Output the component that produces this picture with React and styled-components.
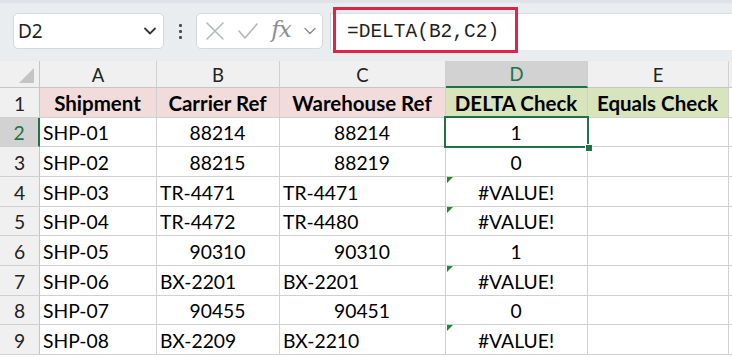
import React from "react";
import styled, { createGlobalStyle, css } from "styled-components";

const GlobalStyle = createGlobalStyle`
  html, body { margin: 0; padding: 0; background: #eaedf0; overflow: hidden; }
  #root { width: 732px; height: 357px; overflow: hidden; }
`;

const CELL_FONT = `Lato, "Noto Sans", "Liberation Sans", sans-serif`;
const GREEN = "#217346";

const Page = styled.div`
  width: 732px;
  height: 357px;
  display: flex;
  flex-direction: column;
  background: #eaedf0;
`;

const TopShade = styled.div`
  height: 3px;
  background: #dfe2e6;
`;

const Toolbar = styled.div`
  height: 58px;
  display: flex;
  align-items: flex-start;
  padding-top: 10px;
  box-sizing: border-box;
  padding-left: 13px;
`;

const Box = styled.div`
  height: 36px;
  box-sizing: border-box;
  background: #fff;
  border: 1px solid #d5d8dc;
  border-radius: 5px;
  display: flex;
  align-items: center;
`;

const NameBox = styled(Box)`
  width: 151px;
  padding: 0 6px 0 4px;
  justify-content: space-between;
  font-family: "Noto Sans", "Open Sans", sans-serif;
  font-size: 19px;
  color: #1f1f1f;
`;

const Dots = styled.div`
  width: 32px;
  height: 36px;
  display: flex;
  flex-direction: column;
  align-items: center;
  justify-content: center;
  gap: 3px;
  span {
    width: 3px;
    height: 3px;
    background: #4a4f55;
    border-radius: 1px;
  }
`;

const FxBox = styled(Box)`
  width: 127px;
  padding: 0 5px 0 8px;
  justify-content: space-between;
`;

const FxText = styled.span`
  font-family: "DejaVu Serif", "Liberation Serif", serif;
  font-style: italic;
  font-size: 23px;
  color: #8a8d91;
  letter-spacing: -1px;
  margin-top: -4px;
`;

const FormulaBar = styled.div`
  flex: 1;
  height: 37px;
  margin-left: 7px;
  background: #fff;
  border-top: 1px solid #dadde1;
  border-left: 1px solid #cfd2d6;
  box-sizing: border-box;
  position: relative;
  display: flex;
  align-items: center;
  padding-left: 16px;
  font-family: "Liberation Mono", "DejaVu Sans Mono", monospace;
  font-size: 19.5px;
  color: #1f1f1f;
`;

const Highlight = styled.div`
  position: absolute;
  left: 2px;
  top: -7px;
  width: 185px;
  height: 46px;
  box-sizing: border-box;
  border: 3px solid #e1234b;
  pointer-events: none;
`;

const Sheet = styled.div`
  display: grid;
  grid-template-columns: 40px 117px 123px 166px 142px 141px 1fr;
  grid-template-rows: 27px repeat(9, 29.67px) 1fr;
  background: #fff;
  flex: 1;
  font-family: ${CELL_FONT};
  font-size: 19.3px;
  color: #000;
`;

const ColHead = styled.div`
  background: ${(p) => (p.$active ? "#d2d2d2" : "#f0f0f0")};
  color: ${(p) => (p.$active ? GREEN : "#222")};
  border-right: 1px solid #d0d0d0;
  border-bottom: ${(p) => (p.$active ? `2px solid ${GREEN}` : "1px solid #c6c6c6")};
  box-sizing: border-box;
  display: flex;
  align-items: center;
  justify-content: center;
  padding-top: 1px;
  font-size: 18.5px;
`;

const Corner = styled.div`
  background: #f0f0f0;
  border-right: 1px solid #c6c6c6;
  border-bottom: 1px solid #c6c6c6;
  box-sizing: border-box;
  position: relative;
  &::after {
    content: "";
    position: absolute;
    right: 5px;
    bottom: 4px;
    width: 0;
    height: 0;
    border-left: 15px solid transparent;
    border-bottom: 15px solid #c4c4c4;
  }
`;

const RowHead = styled.div`
  background: ${(p) => (p.$active ? "#d2d2d2" : "#f0f0f0")};
  color: ${(p) => (p.$active ? GREEN : "#222")};
  border-right: ${(p) => (p.$active ? `2px solid ${GREEN}` : "1px solid #c6c6c6")};
  border-bottom: 1px solid #d0d0d0;
  box-sizing: border-box;
  display: flex;
  align-items: center;
  justify-content: center;
  padding-top: 2px;
`;

const Cell = styled.div`
  border-right: 1px solid #d0d0d0;
  border-bottom: 1px solid #d0d0d0;
  box-sizing: border-box;
  display: flex;
  align-items: center;
  padding: 2px 4px 0 3px;
  white-space: nowrap;
  overflow: visible;
  position: relative;
  justify-content: ${(p) => (p.$align === "center" ? "center" : "flex-start")};
  ${(p) =>
    p.$fill &&
    css`
      background: ${p.$fill};
      font-weight: 700;
      font-size: 20.5px;
      justify-content: center;
    `}
  ${(p) =>
    p.$error &&
    css`
      &::before {
        content: "";
        position: absolute;
        left: 1px;
        top: 0;
        border-top: 6px solid #1a8a2a;
        border-right: 6px solid transparent;
      }
    `}
  ${(p) =>
    p.$selected &&
    css`
      &::after {
        content: "";
        position: absolute;
        left: -2px;
        top: -2px;
        right: -2px;
        bottom: -2px;
        border: 2px solid ${GREEN};
        z-index: 2;
      }
    `}
`;

const Handle = styled.span`
  position: absolute;
  right: -6px;
  bottom: -6px;
  width: 6px;
  height: 6px;
  background: ${GREEN};
  border: 1px solid #fff;
  z-index: 3;
`;

const Filler = styled.div`
  background: ${(p) => (p.$head ? "#f0f0f0" : "#fff")};
  border-bottom: ${(p) => (p.$head ? "1px solid #c6c6c6" : "1px solid #d0d0d0")};
  box-sizing: border-box;
`;

const Chevron = ({ size = 14, color = "#33373b", w = 1.8 }) => (
  <svg width={size} height={size} viewBox="0 0 14 14" fill="none">
    <path d="M2 4.5 L7 9.5 L12 4.5" stroke={color} strokeWidth={w} strokeLinecap="round" strokeLinejoin="round" />
  </svg>
);

const CrossIcon = () => (
  <svg width="20" height="20" viewBox="0 0 20 20" fill="none">
    <path d="M2 2 L18 18 M18 2 L2 18" stroke="#b4b7bb" strokeWidth="1.6" strokeLinecap="round" />
  </svg>
);

const CheckIcon = () => (
  <svg width="22" height="20" viewBox="0 0 22 20" fill="none">
    <path d="M2 10 L8 17 L20 3" stroke="#b4b7bb" strokeWidth="1.6" strokeLinecap="round" strokeLinejoin="round" />
  </svg>
);

const rows = [
  ["SHP-01", "88214", "88214", "1", "num"],
  ["SHP-02", "88215", "88219", "0", "num"],
  ["SHP-03", "TR-4471", "TR-4471", "#VALUE!", "txt"],
  ["SHP-04", "TR-4472", "TR-4480", "#VALUE!", "txt"],
  ["SHP-05", "90310", "90310", "1", "num"],
  ["SHP-06", "BX-2201", "BX-2201", "#VALUE!", "txt"],
  ["SHP-07", "90455", "90451", "0", "num"],
  ["SHP-08", "BX-2209", "BX-2210", "#VALUE!", "txt"],
];

const PINK = "#f2dcdb";
const LIME = "#d8e4bc";

export default function App() {
  return (
    <Page>
      <GlobalStyle />
      <TopShade />
      <Toolbar>
        <NameBox>
          <span>D2</span>
          <Chevron />
        </NameBox>
        <Dots>
          <span />
          <span />
          <span />
        </Dots>
        <FxBox>
          <CrossIcon />
          <CheckIcon />
          <FxText>fx</FxText>
          <Chevron size={14} color="#8a8d91" w={1.4} />
        </FxBox>
        <FormulaBar>
          =DELTA(B2,C2)
          <Highlight />
        </FormulaBar>
      </Toolbar>
      <Sheet>
        <Corner />
        <ColHead>A</ColHead>
        <ColHead>B</ColHead>
        <ColHead>C</ColHead>
        <ColHead $active>D</ColHead>
        <ColHead>E</ColHead>
        <Filler $head />

        <RowHead>1</RowHead>
        <Cell $fill={PINK}>Shipment</Cell>
        <Cell $fill={PINK}>Carrier Ref</Cell>
        <Cell $fill={PINK}>Warehouse Ref</Cell>
        <Cell $fill={LIME}>DELTA Check</Cell>
        <Cell $fill={LIME}>Equals Check</Cell>
        <Filler />

        {rows.map((r, i) => {
          const n = i + 2;
          const align = r[4] === "num" ? "center" : "left";
          const err = r[3] === "#VALUE!";
          return (
            <React.Fragment key={n}>
              <RowHead $active={n === 2}>{n}</RowHead>
              <Cell>{r[0]}</Cell>
              <Cell $align={align}>{r[1]}</Cell>
              <Cell $align={align}>{r[2]}</Cell>
              <Cell $align="center" $error={err} $selected={n === 2}>
                {r[3]}
                {n === 2 && <Handle />}
              </Cell>
              <Cell />
              <Filler />
            </React.Fragment>
          );
        })}
      </Sheet>
    </Page>
  );
}
